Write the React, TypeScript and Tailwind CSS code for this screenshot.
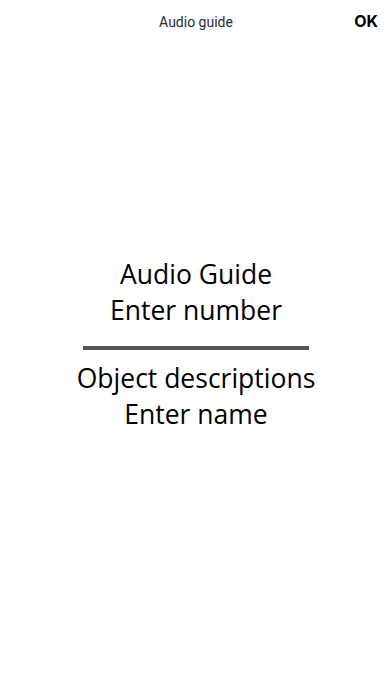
import React from "react";

export default function App() {
    return (
        <div className="w-[392px] h-[696px] bg-white flex flex-col">
            <header className="relative h-[44px] bg-white flex items-center justify-center shrink-0">
                <span className="text-[14px] text-[#2a2a3c] font-['Roboto',sans-serif]">
                    Audio guide
                </span>
                <button className="absolute right-[14px] top-0 h-[42px] text-[16px] font-bold text-black font-['Inter',sans-serif]">
                    OK
                </button>
            </header>
            <main className="flex flex-col items-center font-['Open_Sans',sans-serif] text-black text-[26.5px] leading-[36px] pt-[212px]">
                <p>Audio Guide</p>
                <p>Enter number</p>
                <div className="w-[226px] h-[4px] bg-[#555555] mt-[18px] mb-[10px]" />
                <p>Object descriptions</p>
                <p>Enter name</p>
            </main>
        </div>
    );
}
